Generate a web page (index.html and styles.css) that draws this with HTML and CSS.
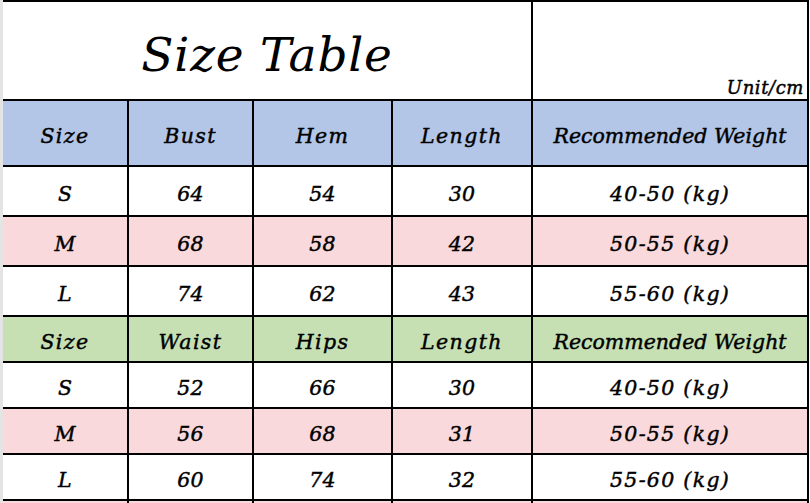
FILE: index.html
```html
<!DOCTYPE html>
<html lang="en">
<head>
<meta charset="utf-8">
<title>Size Table</title>
<link rel="stylesheet" href="styles.css">
</head>
<body>
<div class="sheet">
  <div class="gutter"></div>
  <table class="size-table">
    <colgroup>
      <col class="c1"><col class="c2"><col class="c3"><col class="c4"><col class="c5">
    </colgroup>
    <tr class="title-row">
      <td colspan="4" class="title">Size Table</td>
      <td class="unit">Unit/cm</td>
    </tr>
    <tr class="head blue">
      <td>Size</td><td>Bust</td><td>Hem</td><td>Length</td><td class="long">Recommended Weight</td>
    </tr>
    <tr class="row tall"><td>S</td><td>64</td><td>54</td><td>30</td><td class="kg">40-50 (kg)</td></tr>
    <tr class="row tall pink"><td>M</td><td>68</td><td>58</td><td>42</td><td class="kg">50-55 (kg)</td></tr>
    <tr class="row tall"><td>L</td><td>74</td><td>62</td><td>43</td><td class="kg">55-60 (kg)</td></tr>
    <tr class="head green short">
      <td>Size</td><td>Waist</td><td>Hips</td><td>Length</td><td class="long">Recommended Weight</td>
    </tr>
    <tr class="row short"><td>S</td><td>52</td><td>66</td><td>30</td><td class="kg">40-50 (kg)</td></tr>
    <tr class="row short pink"><td>M</td><td>56</td><td>68</td><td>31</td><td class="kg">50-55 (kg)</td></tr>
    <tr class="row short"><td>L</td><td>60</td><td>74</td><td>32</td><td class="kg">55-60 (kg)</td></tr>
    <tr class="row short pink"><td></td><td></td><td></td><td></td><td></td></tr>
  </table>
</div>
</body>
</html>
```

FILE: styles.css
```css
html, body {
  margin: 0;
  padding: 0;
  background: #ffffff;
  overflow: hidden;
}

.sheet {
  display: flex;
  width: 810px;
  height: 503px;
  overflow: hidden;
}

.gutter {
  flex: 0 0 3px;
  background: #e4e4e4;
}

.size-table {
  border-collapse: collapse;
  table-layout: fixed;
  width: 805px;
  flex: 0 0 auto;
  font-family: "DejaVu Serif", serif;
  font-style: italic;
  color: #000;
}

.c1 { width: 125px; }
.c2 { width: 125px; }
.c3 { width: 139px; }
.c4 { width: 140px; }
.c5 { width: 276px; }

.size-table td {
  border: 2px solid #000;
  text-align: center;
  vertical-align: middle;
  padding: 5px 0 0 0;
  font-size: 20.5px;
  line-height: 24px;
  letter-spacing: 0.2px;
  -webkit-text-stroke: 0.45px #000;
  white-space: nowrap;
}

.size-table tr td:first-child {
  border-left: none;
}

.title-row { height: 99px; }

.size-table .title {
  font-size: 47px;
  line-height: 50px;
  letter-spacing: 0.8px;
  -webkit-text-stroke: 0;
  padding-top: 8px;
}

.size-table .unit {
  vertical-align: bottom;
  text-align: right;
  font-size: 18px;
  line-height: 20px;
  letter-spacing: 0.6px;
  padding: 0 3px 1px 0;
}

.size-table .head td {
  letter-spacing: 1.4px;
}

.size-table .head .long {
  letter-spacing: 0;
}

.size-table .kg {
  letter-spacing: 1.3px;
}

.head { height: 66px; }
.tall { height: 50px; }
.short { height: 46px; }
.head.short { height: 46px; }

.blue td { background: #b4c6e7; }
.green td { background: #c6e0b4; }
.pink td { background: #f9d9dc; }
```
